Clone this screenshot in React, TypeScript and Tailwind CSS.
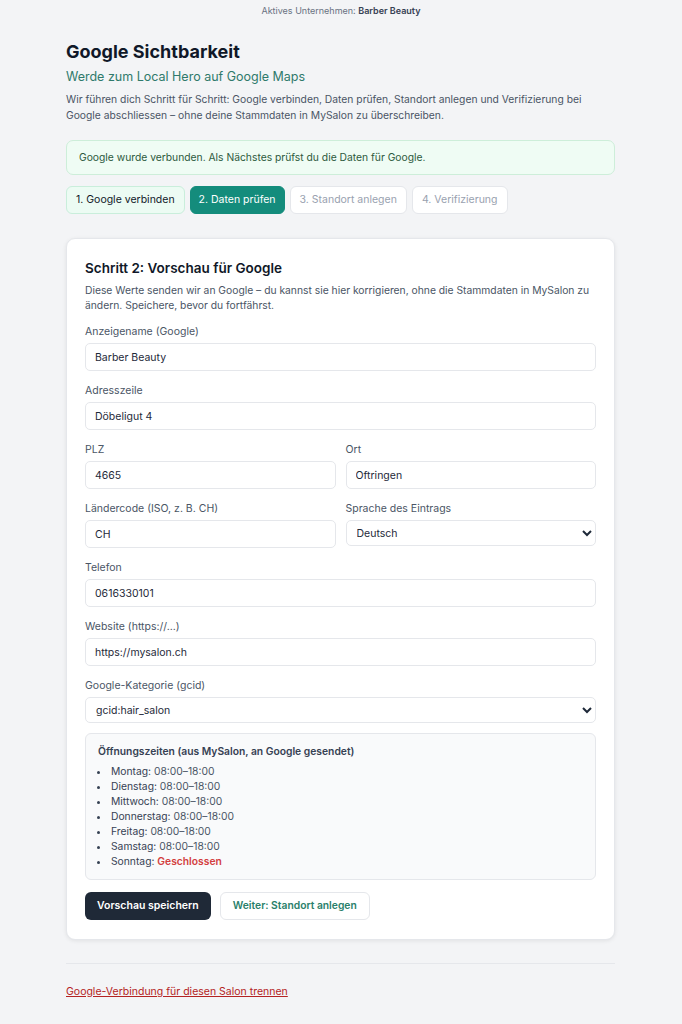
import React from 'react';

const hours = [
  { day: 'Montag', time: '08:00–18:00' },
  { day: 'Dienstag', time: '08:00–18:00' },
  { day: 'Mittwoch', time: '08:00–18:00' },
  { day: 'Donnerstag', time: '08:00–18:00' },
  { day: 'Freitag', time: '08:00–18:00' },
  { day: 'Samstag', time: '08:00–18:00' },
  { day: 'Sonntag', time: null },
];

function Field({ label, value, select }: { label: string; value: string; select?: boolean }) {
  return (
    <label className="flex flex-col gap-[4px]">
      <span className="text-[10.5px] leading-[14px] text-gray-600">{label}</span>
      {select ? (
        <select
          defaultValue={value}
          className="h-[26px] w-full rounded-[5px] border border-gray-200 bg-white px-[6px] text-[10.5px] text-gray-800"
        >
          <option>{value}</option>
        </select>
      ) : (
        <input
          defaultValue={value}
          className="h-[28px] w-full rounded-[5px] border border-gray-200 bg-white px-[9px] text-[10.5px] text-gray-800 outline-none"
        />
      )}
    </label>
  );
}

export default function App() {
  return (
    <div className="min-h-screen bg-[#f3f4f6] font-['Inter',sans-serif] text-gray-900">
      <div className="pt-[5px] text-center text-[9px] leading-[12px] text-gray-500">
        Aktives Unternehmen: <span className="font-semibold text-gray-700">Barber Beauty</span>
      </div>

      <div className="ml-[66px] w-[549px] pt-[23px]">
        <h1 className="text-[18px] font-bold leading-[24px] text-gray-900">Google Sichtbarkeit</h1>
        <p className="mt-[4px] text-[12.5px] leading-[18px] text-[#2f7a6b]">Werde zum Local Hero auf Google Maps</p>
        <p className="mt-[5px] text-[10.3px] leading-[16px] text-gray-600">
          Wir führen dich Schritt für Schritt: Google verbinden, Daten prüfen, Standort anlegen und Verifizierung bei
          Google abschliessen – ohne deine Stammdaten in MySalon zu überschreiben.
        </p>

        <div className="mt-[17px] rounded-[7px] border border-[#cdeed9] bg-[#effcf4] px-[12px] py-[9px] text-[10.3px] leading-[15px] text-[#2d5a3d]">
          Google wurde verbunden. Als Nächstes prüfst du die Daten für Google.
        </div>

        <div className="mt-[11px] flex gap-[5px]">
          <div className="rounded-[6px] border border-[#c9eedb] bg-[#ecfbf3] px-[9px] py-[6px] text-[10.5px] leading-[14px] text-gray-900">
            1. Google verbinden
          </div>
          <div className="rounded-[6px] border border-[#148c7c] bg-[#148c7c] px-[8px] py-[6px] text-[10.5px] leading-[14px] text-white">
            2. Daten prüfen
          </div>
          <div className="rounded-[6px] border border-gray-200 bg-white px-[9px] py-[6px] text-[10.5px] leading-[14px] text-gray-400">
            3. Standort anlegen
          </div>
          <div className="rounded-[6px] border border-gray-200 bg-white px-[9px] py-[6px] text-[10.5px] leading-[14px] text-gray-400">
            4. Verifizierung
          </div>
        </div>

        <div className="mt-[24px] rounded-[9px] border border-gray-200 bg-white px-[18px] pb-[19px] pt-[20px] shadow-[0_1px_4px_rgba(0,0,0,0.08)]">
          <h2 className="text-[13.5px] font-semibold leading-[18px] text-gray-900">Schritt 2: Vorschau für Google</h2>
          <p className="mt-[6px] text-[10.3px] leading-[15px] text-gray-600">
            Diese Werte senden wir an Google – du kannst sie hier korrigieren, ohne die Stammdaten in MySalon zu
            ändern. Speichere, bevor du fortfährst.
          </p>

          <div className="mt-[12px] flex flex-col gap-[13px]">
            <Field label="Anzeigename (Google)" value="Barber Beauty" />
            <Field label="Adresszeile" value="Döbeligut 4" />
            <div className="grid grid-cols-2 gap-[10px]">
              <Field label="PLZ" value="4665" />
              <Field label="Ort" value="Oftringen" />
            </div>
            <div className="grid grid-cols-2 gap-[10px]">
              <Field label="Ländercode (ISO, z. B. CH)" value="CH" />
              <Field label="Sprache des Eintrags" value="Deutsch" select />
            </div>
            <Field label="Telefon" value="0616330101" />
            <Field label="Website (https://...)" value="https://mysalon.ch" />
            <Field label="Google-Kategorie (gcid)" value="gcid:hair_salon" select />
          </div>

          <div className="mt-[10px] rounded-[6px] border border-gray-200 bg-[#f9fafb] px-[12px] pb-[10px] pt-[10px]">
            <div className="text-[10.3px] font-semibold leading-[14px] text-gray-700">
              Öffnungszeiten (aus MySalon, an Google gesendet)
            </div>
            <ul className="mt-[6px] list-disc pl-[12px] text-[10.3px] leading-[15px] text-gray-700 marker:text-gray-700">
              {hours.map((h) => (
                <li key={h.day} className="pl-[1px]">
                  {h.day}:{' '}
                  {h.time ? (
                    <span className="text-gray-600">{h.time}</span>
                  ) : (
                    <span className="font-semibold text-[#d33f3f]">Geschlossen</span>
                  )}
                </li>
              ))}
            </ul>
          </div>

          <div className="mt-[12px] flex gap-[9px]">
            <button className="h-[28px] rounded-[6px] bg-[#1f2937] px-[12px] text-[10.5px] font-semibold text-white">
              Vorschau speichern
            </button>
            <button className="h-[28px] rounded-[6px] border border-gray-200 bg-white px-[12px] text-[10.3px] font-semibold text-[#2a7f6b]">
              Weiter: Standort anlegen
            </button>
          </div>
        </div>

        <hr className="mt-[23px] border-gray-200" />

        <div className="mt-[13px] pb-[20px]">
          <a href="#" className="text-[10.5px] leading-[14px] text-[#b42323] underline">
            Google-Verbindung für diesen Salon trennen
          </a>
        </div>
      </div>
    </div>
  );
}
